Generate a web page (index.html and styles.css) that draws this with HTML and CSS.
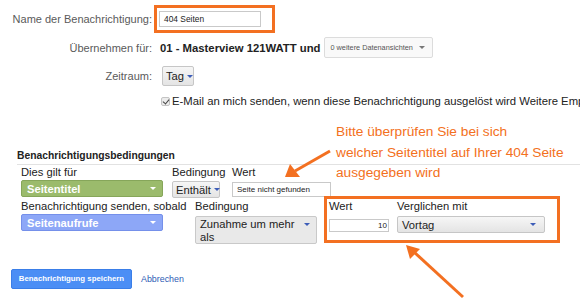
FILE: index.html
```html
<!DOCTYPE html>
<html>
<head>
  <meta charset="UTF-8">
  <title>Benachrichtigung</title>
  <link rel="stylesheet" href="styles.css">
</head>
<body>
  <div class="page">
    <div class="field name-row">
      <span class="label">Name der Benachrichtigung:</span>
      <div class="highlight name-box">
        <div class="text-input name-input">404 Seiten</div>
      </div>
    </div>

    <div class="field views-row">
      <span class="label">Übernehmen für:</span>
      <span class="value">01 - Masterview 121WATT und</span>
      <div class="menu-btn">0 weitere Datenansichten <span class="caret gray"></span></div>
    </div>

    <div class="field period-row">
      <span class="label">Zeitraum:</span>
      <div class="btn tag-btn">Tag <span class="caret blue"></span></div>
    </div>

    <div class="mail-row">
      <span class="checkbox"></span>
      <span class="mail-text">E-Mail an mich senden, wenn diese Benachrichtigung ausgelöst wird Weitere Empfänger</span>
    </div>

    <h3 class="cond-title">Benachrichtigungsbedingungen</h3>

    <div class="cond-row first">
      <div class="col col-applies">
        <span class="col-label">Dies gilt für</span>
        <div class="select green">Seitentitel <span class="caret white"></span></div>
      </div>
      <div class="col col-cond">
        <span class="col-label">Bedingung</span>
        <div class="btn cond-btn">Enthält <span class="caret blue"></span></div>
      </div>
      <div class="col">
        <span class="col-label">Wert</span>
        <div class="text-input value-input">Seite nicht gefunden</div>
      </div>
    </div>

    <div class="cond-row second">
      <div class="col col-send">
        <span class="col-label">Benachrichtigung senden, sobald</span>
        <div class="select blue-select">Seitenaufrufe <span class="caret white"></span></div>
      </div>
      <div class="col col-cond2">
        <span class="col-label">Bedingung</span>
        <div class="btn multi-btn">Zunahme um mehr als <span class="caret blue"></span></div>
      </div>
      <div class="highlight compare-box">
        <div class="col col-wert">
          <span class="col-label">Wert</span>
          <div class="text-input number-input">10</div>
        </div>
        <div class="col">
          <span class="col-label">Verglichen mit</span>
          <div class="btn compare-btn">Vortag <span class="caret blue"></span></div>
        </div>
      </div>
    </div>

    <div class="actions">
      <div class="save-btn">Benachrichtigung speichern</div>
      <a class="cancel" href="#">Abbrechen</a>
    </div>

    <p class="note">Bitte überprüfen Sie bei sich<br>welcher Seitentitel auf Ihrer 404 Seite<br>ausgegeben wird</p>

    <svg class="arrows" width="580" height="299" viewBox="0 0 580 299">
      <line x1="330" y1="151" x2="295" y2="171" stroke="#f37021" stroke-width="3"/>
      <polygon points="285,177 290,164 300,177" fill="#f37021"/>
      <line x1="463" y1="297" x2="414" y2="252" stroke="#f37021" stroke-width="3"/>
      <polygon points="406,245 420,249 410,259" fill="#f37021"/>
    </svg>
  </div>
</body>
</html>
```

FILE: styles.css
```css
* {
  box-sizing: border-box;
}

body {
  margin: 0;
  background: #fff;
}

.page {
  position: relative;
  width: 580px;
  height: 299px;
  overflow: hidden;
  font-family: "Liberation Sans", Arial, sans-serif;
  color: #222;
}

.field {
  display: flex;
  align-items: center;
  white-space: nowrap;
}

.label {
  width: 152px;
  text-align: right;
  font-size: 11px;
  color: #5a5a5a;
}

.highlight {
  border: 3px solid #f37021;
}

/* name */
.name-row {
  margin-top: 5px;
}

.name-box {
  margin-left: 2px;
  padding: 3px 11px 3px 2px;
}

.text-input {
  height: 15px;
  border: 1px solid #c9c9c9;
  background: #fff;
  font-size: 8px;
  line-height: 13px;
  padding: 0 4px;
  color: #222;
  white-space: nowrap;
}

.name-input {
  width: 102px;
  height: 16px;
  line-height: 14px;
  font-size: 8.4px;
}

/* views */
.views-row {
  margin-top: 4px;
}

.value {
  margin-left: 8px;
  font-size: 11.3px;
  font-weight: bold;
  color: #222;
}

.menu-btn {
  display: flex;
  align-items: center;
  justify-content: space-between;
  margin-left: 3px;
  width: 109px;
  height: 21px;
  padding: 0 7px 0 6px;
  border: 1px solid #dcdcdc;
  border-radius: 2px;
  background: #f9f9f9;
  font-size: 7.3px;
  color: #555;
}

.caret {
  display: inline-block;
  width: 0;
  height: 0;
  border-left: 3px solid transparent;
  border-right: 3px solid transparent;
  border-top: 3px solid #777;
}

.caret.blue {
  border-top-color: #3d5db8;
}

.caret.white {
  border-top-color: #fff;
}

.btn {
  display: flex;
  align-items: center;
  border: 1px solid #c6c6c6;
  border-radius: 2px;
  background: linear-gradient(#f6f6f6, #e4e4e4);
  font-size: 11.2px;
  color: #222;
  white-space: nowrap;
}

/* period */
.period-row {
  margin-top: 8px;
}

.tag-btn {
  margin-left: 10px;
  width: 32px;
  height: 20px;
  padding-left: 3px;
  gap: 3px;
}

/* mail */
.mail-row {
  display: flex;
  align-items: center;
  margin-top: 9px;
  padding-left: 161px;
  white-space: nowrap;
}

.checkbox {
  position: relative;
  flex: none;
  width: 9px;
  height: 9px;
  border: 1px solid #c4c4c4;
  border-radius: 2px;
  background: #ececec;
}

.checkbox::after {
  content: "";
  position: absolute;
  left: 2px;
  top: 0;
  width: 3px;
  height: 5px;
  border-right: 1px solid #444;
  border-bottom: 1px solid #444;
  transform: rotate(40deg);
}

.mail-text {
  margin-left: 2px;
  font-size: 11.3px;
  color: #222;
}

/* conditions */
.cond-title {
  margin: 43px 0 0 17px;
  padding-bottom: 2px;
  border-bottom: 1px solid #e2e2e2;
  font-size: 10.3px;
  line-height: 12px;
  font-weight: bold;
  color: #222;
}

.cond-row {
  display: flex;
  align-items: flex-start;
  padding-left: 21px;
}

.col {
  display: flex;
  flex-direction: column;
}

.col-label {
  height: 15px;
  font-size: 11.2px;
  line-height: 15px;
  color: #222;
  white-space: nowrap;
}

.col-applies {
  width: 151px;
}

.select {
  display: flex;
  align-items: center;
  justify-content: space-between;
  width: 142px;
  height: 17px;
  padding: 0 6px 0 5px;
  border-radius: 2px;
  font-size: 11.2px;
  font-weight: bold;
  color: #fff;
}

.green {
  background: #9bbb6c;
  border: 1px solid #86a65a;
}

.col-cond {
  width: 60px;
}

.cond-btn {
  width: 48px;
  height: 17px;
  margin-top: 1px;
  padding-left: 3px;
  gap: 3px;
}

.value-input {
  width: 99px;
  height: 15px;
  margin-top: 2px;
}

.second {
  margin-top: 1px;
}

.col-send {
  width: 174px;
}

.blue-select {
  background: #8da7f7;
  border: 1px solid #7590ea;
}

.col-cond2 {
  width: 129px;
}

.multi-btn {
  position: relative;
  display: block;
  width: 122px;
  height: 28px;
  margin-top: 2px;
  padding: 1px 14px 0 4px;
  line-height: 13px;
  white-space: normal;
  border-color: #c9c9c9;
  background: #e9e9e9;
}

.multi-btn .caret {
  position: absolute;
  right: 6px;
  top: 6px;
}

.compare-box {
  display: flex;
  margin-top: -3px;
  padding: 0 12px 7px 2px;
}

.col-wert {
  width: 68px;
}

.number-input {
  width: 60px;
  height: 13px;
  margin-top: 5px;
  padding: 0 1px;
  line-height: 11px;
  text-align: right;
}

.compare-btn {
  width: 148px;
  height: 17px;
  margin-top: 2px;
  padding: 0 8px 0 4px;
  justify-content: space-between;
}

/* actions */
.actions {
  display: flex;
  align-items: center;
  margin: 25px 0 0 11px;
}

.save-btn {
  width: 121px;
  height: 20px;
  border: 1px solid #3a7ee8;
  border-radius: 2px;
  background: #4b8ef5;
  color: #fff;
  font-size: 7.8px;
  font-weight: bold;
  line-height: 18px;
  text-align: center;
}

.cancel {
  margin-left: 9px;
  font-size: 8.9px;
  color: #2c5cb5;
  text-decoration: none;
}

/* annotation overlay */
.note {
  position: absolute;
  left: 336px;
  top: 122px;
  margin: 0;
  font-size: 13.7px;
  line-height: 20.5px;
  color: #f37021;
}

.arrows {
  position: absolute;
  left: 0;
  top: 0;
  pointer-events: none;
}
```
